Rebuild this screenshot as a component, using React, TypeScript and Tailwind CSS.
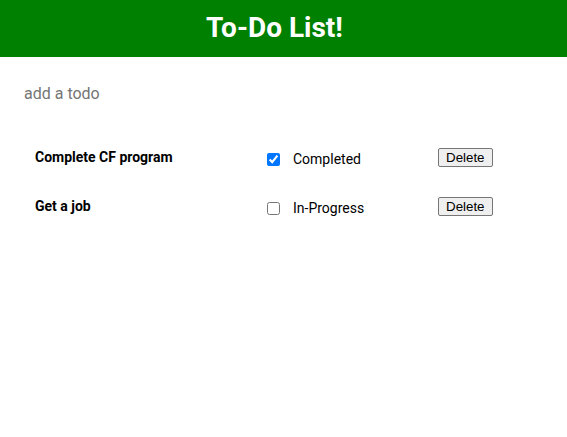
import React, { useState } from 'react'

interface Todo {
  id: number
  title: string
  done: boolean
}

const App: React.FC = () => {
  const [todos, setTodos] = useState<Todo[]>([
    { id: 1, title: 'Complete CF program', done: true },
    { id: 2, title: 'Get a job', done: false },
  ])
  const [text, setText] = useState('')

  const toggle = (id: number) =>
    setTodos(todos.map((t) => (t.id === id ? { ...t, done: !t.done } : t)))

  const remove = (id: number) => setTodos(todos.filter((t) => t.id !== id))

  return (
    <div className="min-h-screen bg-white font-['Roboto',sans-serif]">
      {/* Header */}
      <div className="h-[57px] bg-[#008000] flex justify-center pt-[14px] pr-[18px]">
        <h1 className="text-[28px] font-bold text-white leading-[28px]">To-Do List!</h1>
      </div>

      {/* Input */}
      <form
        className="pl-[24px] pt-[27px]"
        onSubmit={(e) => {
          e.preventDefault()
          if (!text.trim()) return
          setTodos([...todos, { id: Date.now(), title: text, done: false }])
          setText('')
        }}
      >
        <input
          value={text}
          onChange={(e) => setText(e.target.value)}
          placeholder="add a todo"
          className="block w-[300px] h-[20px] text-base text-black placeholder:text-[#757575] outline-none leading-[20px]"
        />
      </form>

      {/* List */}
      <div className="pl-[35px] pt-[43px] flex flex-col">
        {todos.map((todo) => (
          <div key={todo.id} className="flex items-start h-[49px]">
            <span className="w-[232px] text-sm leading-[20px] font-bold text-black">{todo.title}</span>
            <input
              type="checkbox"
              checked={todo.done}
              onChange={() => toggle(todo.id)}
              className="m-0 w-[13px] h-[13px] mr-[13px] mt-[6px]"
            />
            <span className="w-[145px] text-sm leading-[20px] text-black mt-[2px]">
              {todo.done ? 'Completed' : 'In-Progress'}
            </span>
            <button
              onClick={() => remove(todo.id)}
              className="h-[19px] mt-[1px] px-[7px] text-[13.33px] leading-none font-['Arial','Liberation_Sans',sans-serif] text-black bg-[#efefef] border border-[#767676] rounded-[2px]"
            >
              Delete
            </button>
          </div>
        ))}
      </div>
    </div>
  )
}

export default App
